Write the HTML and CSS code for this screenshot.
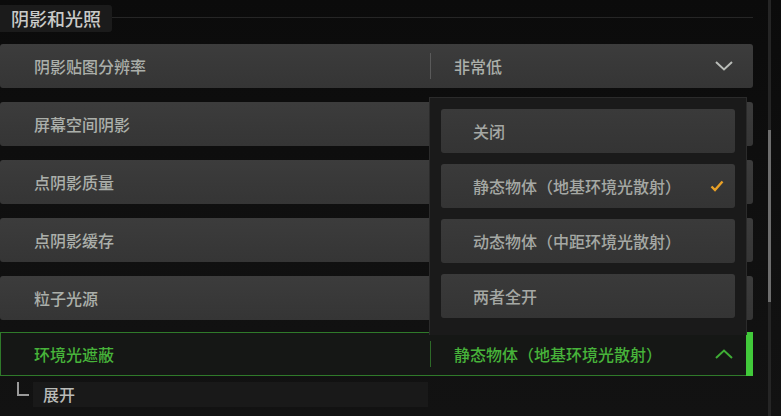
FILE: index.html
```html
<!DOCTYPE html>
<html lang="zh">
<head>
<meta charset="utf-8">
<link rel="stylesheet" href="styles.css">
</head>
<body>
<div class="page">
  <div class="main">
    <div class="section-head">
      <div class="tab">阴影和光照</div>
      <div class="head-line"></div>
    </div>
    <div class="rows">
      <div class="row">
        <div class="label">阴影贴图分辨率</div>
        <div class="value">
          <span class="divider"></span>
          <span class="value-text">非常低</span>
          <svg class="chev" width="18" height="10" viewBox="0 0 18 10"><path d="M1 1 L9 8.5 L17 1" fill="none" stroke="#b9bcb8" stroke-width="2"/></svg>
        </div>
      </div>
      <div class="row"><div class="label">屏幕空间阴影</div></div>
      <div class="row"><div class="label">点阴影质量</div></div>
      <div class="row"><div class="label">点阴影缓存</div></div>
      <div class="row"><div class="label">粒子光源</div></div>
      <div class="row active">
        <div class="label">环境光遮蔽</div>
        <div class="value">
          <span class="divider"></span>
          <span class="value-text">静态物体（地基环境光散射）</span>
          <svg class="chev" width="18" height="10" viewBox="0 0 18 10"><path d="M1 9 L9 1.5 L17 9" fill="none" stroke="#3fae35" stroke-width="2"/></svg>
        </div>
        <span class="active-bar"></span>
      </div>
      <div class="sub">
        <span class="elbow"></span>
        <div class="sub-box">展开</div>
      </div>
    </div>
    <div class="menu">
      <div class="opt">关闭</div>
      <div class="opt selected">静态物体（地基环境光散射）<svg class="check" width="14" height="12" viewBox="0 0 14 12"><path d="M1.5 6.5 L5 10 L12.5 1.5" fill="none" stroke="#e9a127" stroke-width="2.4"/></svg></div>
      <div class="opt">动态物体（中距环境光散射）</div>
      <div class="opt">两者全开</div>
    </div>
  </div>
  <div class="scroll"><div class="thumb"></div></div>
</div>
</body>
</html>
```

FILE: styles.css
```css
* { box-sizing: border-box; }
html, body { margin: 0; padding: 0; }
body {
  width: 781px;
  height: 416px;
  overflow: hidden;
  background: linear-gradient(180deg, #0b0b0b 0%, #101010 60%, #121212 100%);
  font-family: "Noto Sans CJK SC", "Noto Sans", sans-serif;
  font-weight: 500;
}
.page {
  display: flex;
  height: 416px;
}
.main {
  position: relative;
  width: 753px;
  flex: none;
}
.section-head {
  display: flex;
  align-items: center;
  height: 30px;
  margin-top: 3px;
}
.tab {
  width: 112px;
  height: 27px;
  background: #1b1b1b;
  color: #c9cac8;
  font-size: 18px;
  line-height: 27px;
  padding-left: 11px;
  border-radius: 0 3px 3px 0;
}
.head-line {
  flex: 1;
  height: 1px;
  background: #262626;
  margin-top: -2px;
}
.rows {
  display: flex;
  flex-direction: column;
  gap: 14px;
  margin-top: 11px;
}
.row {
  position: relative;
  display: flex;
  align-items: center;
  height: 44px;
  background: linear-gradient(180deg, #3c3c3c 0%, #353535 100%);
  border-radius: 3px;
}
.label {
  width: 430px;
  padding-left: 34px;
  font-size: 16px;
  color: #abafaa;
  flex: none;
}
.value {
  display: flex;
  align-items: center;
  flex: 1;
  height: 100%;
}
.divider {
  width: 1px;
  height: 26px;
  background: #5a5a5a;
  flex: none;
}
.value-text {
  margin-left: 23px;
  font-size: 16px;
  color: #abafaa;
  flex: 1;
}
.chev {
  margin-right: 20px;
  flex: none;
}
.row.active {
  background: #151715;
  border: 1px solid #2f7a2a;
  border-right: none;
  border-radius: 0;
  margin-top: -2px;
  padding-right: 7px;
}
.row.active .label { padding-left: 33px; width: 429px; color: #47b33a; }
.row.active .value-text { color: #47b33a; }
.row.active .divider { background: #2d6a28; }
.row.active .chev { margin-right: 13px; }
.active-bar {
  position: absolute;
  right: 0;
  top: -1px;
  bottom: -1px;
  width: 7px;
  background: #41c93a;
}
.sub {
  display: flex;
  align-items: flex-start;
  margin-top: -8px;
  height: 26px;
}
.elbow {
  width: 12px;
  height: 14px;
  margin-left: 17px;
  margin-right: 4px;
  border-left: 2px solid #9a9a9a;
  border-bottom: 2px solid #9a9a9a;
}
.sub-box {
  width: 395px;
  height: 25px;
  background: #191919;
  color: #b9bbb8;
  font-size: 16px;
  line-height: 25px;
  padding-left: 10px;
}
.menu {
  position: absolute;
  left: 429px;
  top: 97px;
  width: 318px;
  height: 238px;
  background: #1a1a1a;
  border: 1px solid #2b2b2b;
  border-bottom: none;
  padding: 11px 11px 0 11px;
  display: flex;
  flex-direction: column;
  gap: 11px;
}
.opt {
  display: flex;
  align-items: center;
  height: 44px;
  padding-left: 32px;
  padding-right: 11px;
  background: linear-gradient(180deg, #3a3a3a 0%, #343434 100%);
  border-radius: 3px;
  color: #a5a8a4;
  font-size: 16px;
  flex: none;
}
.opt .check { margin-left: auto; }
.scroll {
  width: 3px;
  margin-left: 15px;
  height: 416px;
  background: #252525;
  position: relative;
}
.thumb {
  position: absolute;
  left: 0;
  top: 130px;
  width: 3px;
  height: 172px;
  background: #6e6e6e;
}
```
